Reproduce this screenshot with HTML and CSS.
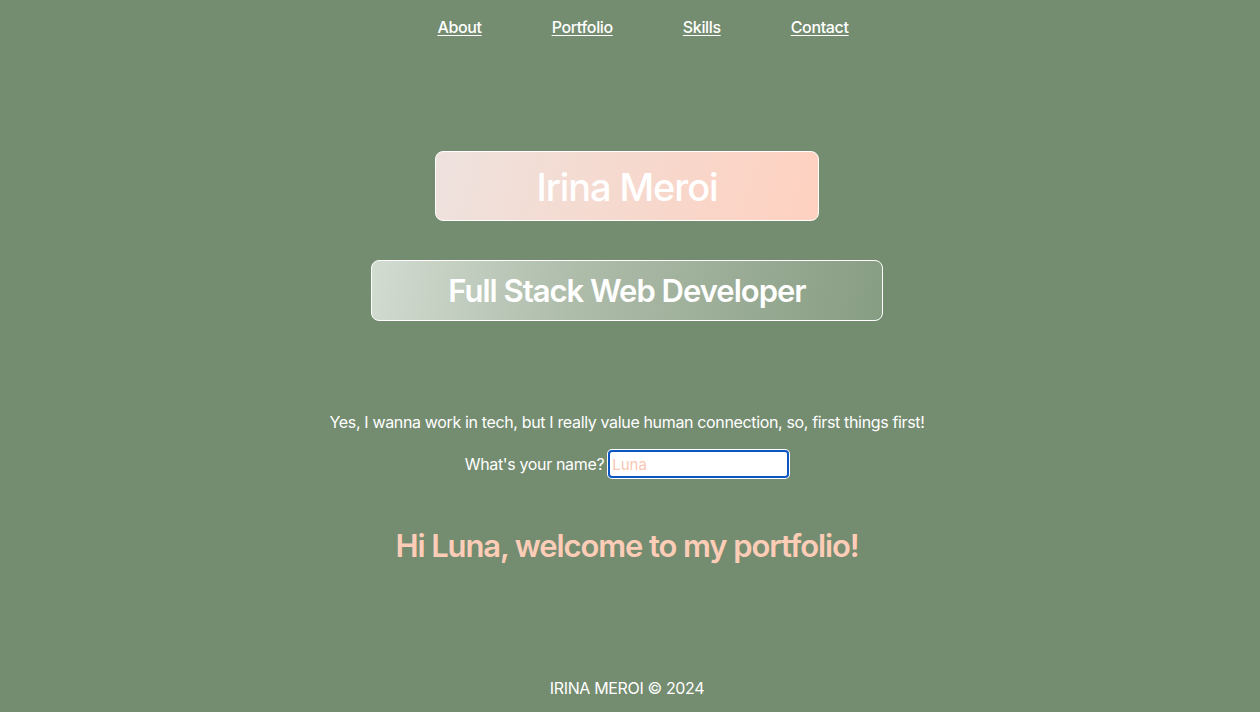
FILE: index.html
```html
<!DOCTYPE html>
<html lang="en">
<head>
<meta charset="utf-8">
<title>Irina Meroi</title>
<link rel="stylesheet" href="styles.css">
</head>
<body>
<nav class="nav">
  <a href="#about">About</a>
  <a href="#portfolio">Portfolio</a>
  <a href="#skills">Skills</a>
  <a href="#contact">Contact</a>
</nav>
<main class="hero">
  <h1 class="name-box">Irina Meroi</h1>
  <h2 class="role-box">Full Stack Web Developer</h2>
  <p class="intro">Yes, I wanna work in tech, but I really value human connection, so, first things first!</p>
  <form class="ask">
    <label for="name">What's your name?</label>
    <input id="name" class="name-input" type="text" placeholder="Luna">
  </form>
  <h3 class="greeting">Hi Luna, welcome to my portfolio!</h3>
</main>
<footer class="footer">IRINA MEROI © 2024</footer>
</body>
</html>
```
FILE: styles.css
```css
html, body {
  margin: 0;
  padding: 0;
}
body {
  background: #748c70;
  color: #ffffff;
  font-family: Inter, "Noto Sans", "Liberation Sans", sans-serif;
  font-size: 16px;
  letter-spacing: -0.35px;
  height: 712px;
  display: flex;
  flex-direction: column;
  align-items: center;
}
.nav {
  display: flex;
  gap: 70px;
  padding-top: 17px;
  padding-left: 26px;
  height: 20px;
}
.nav a {
  color: #ffffff;
  text-decoration: underline;
  text-underline-offset: 2px;
  font-weight: 500;
  line-height: 20px;
}
.hero {
  display: flex;
  flex-direction: column;
  align-items: center;
  margin-left: -6px;
}
.name-box {
  margin: 114px 0 0;
  width: 382px;
  height: 68px;
  border: 1px solid #ffffff;
  border-radius: 8px;
  background: linear-gradient(105deg, #eee2de 0%, #f6d9ce 50%, #fed1c0 100%);
  font-size: 38px;
  font-weight: 500;
  line-height: 70px;
  text-align: center;
  letter-spacing: -1.1px;
}
.role-box {
  margin: 39px 0 0;
  width: 510px;
  height: 59px;
  border: 1px solid #ffffff;
  border-radius: 8px;
  background: linear-gradient(100deg, #d2dcd1 0%, #aebcaa 40%, #879d83 100%);
  font-size: 31px;
  font-weight: 600;
  line-height: 60px;
  text-align: center;
  letter-spacing: -1px;
}
.intro {
  margin: 91px 0 0;
  line-height: 20px;
  font-size: 16px;
}
.ask {
  margin-top: 18px;
  display: flex;
  align-items: center;
  gap: 4px;
}
.ask label {
  line-height: 20px;
}
.name-input {
  width: 181px;
  height: 28px;
  box-sizing: border-box;
  border: 2px solid #0b56c2;
  border-radius: 4px;
  box-shadow: 0 0 0 1px #ffffff;
  padding: 0 2px;
  font-family: Inter, "Noto Sans", sans-serif;
  font-size: 15px;
  color: #f9c7b3;
  background: #ffffff;
  outline: none;
}
.name-input::placeholder {
  color: #fbc6b2;
  opacity: 1;
}
.greeting {
  margin: 48px 0 0;
  color: #fecdb8;
  font-size: 31px;
  font-weight: 600;
  line-height: 40px;
  letter-spacing: -1.1px;
}
.footer {
  margin-top: auto;
  margin-bottom: 14px;
  margin-left: -6px;
  line-height: 20px;
}
```
